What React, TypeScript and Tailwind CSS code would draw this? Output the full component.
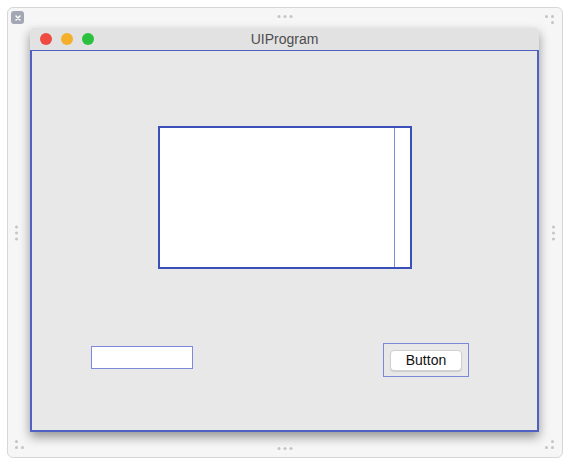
const Dot = () => <span className="block h-[3px] w-[3px] rounded-full bg-[#c4c4c4]" />;

const App = () => {
  return (
    <div className="h-[467px] w-[570px] bg-white p-[7px] font-['Liberation_Sans',Arial,sans-serif]">
      <div className="relative h-[451px] w-[556px] rounded-[6px] border border-[#d6d6d6] bg-[#f6f6f6] pl-[22px] pt-[20px]">
        {/* close badge */}
        <div className="absolute left-[3px] top-[3px] flex h-[13px] w-[13px] items-center justify-center rounded-[3px] bg-[#a3a7b3]">
          <svg viewBox="0 0 10 10" className="h-[8px] w-[8px]">
            <path d="M2.5 2.5 L7.5 7.5 M7.5 2.5 L2.5 7.5" stroke="white" strokeWidth="1.8" strokeLinecap="round" />
          </svg>
        </div>

        {/* resize handles */}
        <div className="absolute left-1/2 top-[7px] flex -translate-x-1/2 gap-[3px]"><Dot /><Dot /><Dot /></div>
        <div className="absolute bottom-[7px] left-1/2 flex -translate-x-1/2 gap-[3px]"><Dot /><Dot /><Dot /></div>
        <div className="absolute left-[7px] top-1/2 flex -translate-y-1/2 flex-col gap-[3px]"><Dot /><Dot /><Dot /></div>
        <div className="absolute right-[7px] top-1/2 flex -translate-y-1/2 flex-col gap-[3px]"><Dot /><Dot /><Dot /></div>
        <div className="absolute right-[8px] top-[7px] flex flex-col items-end gap-[3px]">
          <div className="flex gap-[3px]"><Dot /><Dot /></div>
          <Dot />
        </div>
        <div className="absolute bottom-[8px] left-[7px] flex flex-col items-start gap-[3px]">
          <Dot />
          <div className="flex gap-[3px]"><Dot /><Dot /></div>
        </div>
        <div className="absolute bottom-[8px] right-[8px] flex flex-col items-end gap-[3px]">
          <Dot />
          <div className="flex gap-[3px]"><Dot /><Dot /></div>
        </div>

        {/* window */}
        <div className="flex h-[404px] w-[509px] flex-col shadow-[0_5px_10px_rgba(0,0,0,0.4)]">
          <div className="relative flex h-[22px] items-center rounded-t-[3px] bg-[#e3e2e3] pl-[10px]">
            <div className="flex gap-[9px]">
              <span className="h-[12px] w-[12px] rounded-full bg-[#ee4b43]" />
              <span className="h-[12px] w-[12px] rounded-full bg-[#f4b02a]" />
              <span className="h-[12px] w-[12px] rounded-full bg-[#2bc13e]" />
            </div>
            <span className="absolute left-1/2 -translate-x-1/2 text-[14px] text-[#4d4d4d]">UIProgram</span>
          </div>
          <div className="flex flex-1 flex-col border-2 border-t-[1.5px] border-[#4f62c4] bg-[#e8e8e8]">
            <div className="flex justify-center pt-[75px]">
              <div className="flex h-[143px] w-[254px] border-2 border-[#3a4fb8] bg-white">
                <div className="flex-1" />
                <div className="w-[16px] border-l border-[#7b8bd4]" />
              </div>
            </div>
            <div className="mt-[74px] flex items-start justify-between pl-[59px] pr-[68px]">
              <div className="mt-[3px] h-[23px] w-[102px] border-[1.5px] border-[#7c8ade] bg-white" />
              <div className="flex h-[34px] w-[86px] items-center justify-center border border-[#7a88d8]">
                <div className="flex h-[21px] w-[72px] items-center justify-center rounded-[4px] border border-[#d0d0d0] bg-white text-[14px] font-medium text-[#111] shadow-[0_1px_1px_rgba(0,0,0,0.12)]">
                  Button
                </div>
              </div>
            </div>
          </div>
        </div>
      </div>
    </div>
  );
};

export default App;
